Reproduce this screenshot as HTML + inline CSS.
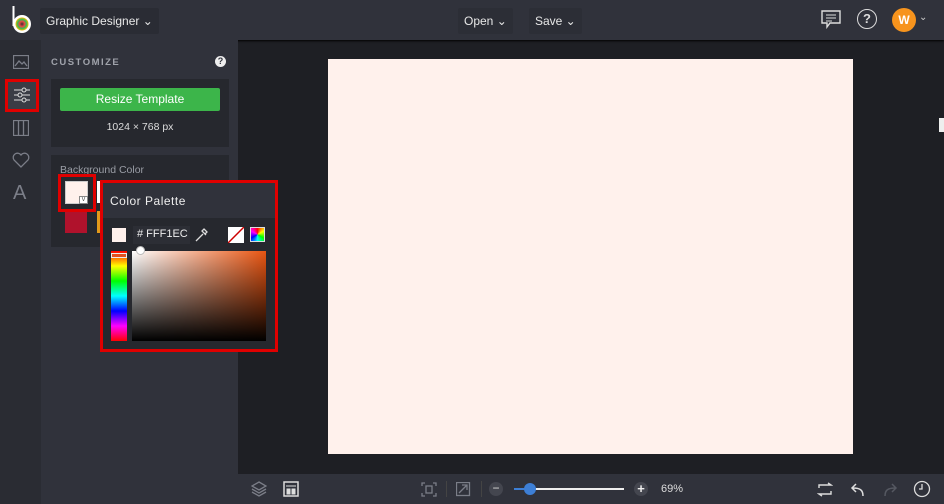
<!DOCTYPE html>
<html><head><meta charset="utf-8"><style>
*{box-sizing:border-box;margin:0;padding:0}
body{width:944px;height:504px;overflow:hidden;background:#1e1f24;font-family:"Liberation Sans",sans-serif;position:relative;color:#ddd}
.abs{position:absolute}
.top{left:0;top:0;width:944px;height:40px;background:#30323b;box-shadow:0 1px 2px #000}
.btn{font-size:12px;color:#e8e8e8;padding:6px 6px;background:#2a2c34;border-radius:2px}
.rail{left:0;top:40px;width:41px;height:464px;background:#2a2c33}
.panel{left:41px;top:40px;width:197px;height:464px;background:#30323b}
.card{background:#26282e}
.bottom{left:238px;top:474px;width:706px;height:30px;background:#30323b}
.ic{stroke:#7b7e88;fill:none;stroke-width:1.3}
</style></head><body>
<div class="abs top">
 <svg class="abs" style="left:10px;top:4px" width="24" height="30"><path d="M3.5 2v20" stroke="#fff" stroke-width="2"/><circle cx="12" cy="20" r="9" fill="#fff"/><circle cx="12" cy="20" r="6.5" fill="url(#g)"/><defs><radialGradient id="g"><stop offset="0" stop-color="#333"/><stop offset=".4" stop-color="#e44"/><stop offset=".7" stop-color="#3b5"/><stop offset="1" stop-color="#fb0"/></radialGradient></defs></svg>
 <div class="abs btn" style="left:40px;top:8px">Graphic Designer ⌄</div>
 <div class="abs btn" style="left:458px;top:8px;background:#2c2e36">Open ⌄</div>
 <div class="abs btn" style="left:529px;top:8px;background:#2c2e36">Save ⌄</div>
 <svg class="abs" style="left:820px;top:9px" width="22" height="20"><path d="M2 2h18v12H10l-3 4v-4H2z" stroke="#ddd" fill="none" stroke-width="1.4"/><path d="M6 6h10M6 9h10M6 12h6" stroke="#ddd"/></svg>
 <div class="abs" style="left:857px;top:9px;width:20px;height:20px;border:1.6px solid #ddd;border-radius:50%;font-size:13px;font-weight:bold;text-align:center;line-height:17px;color:#ddd">?</div>
 <div class="abs" style="left:892px;top:8px;width:24px;height:24px;border-radius:50%;background:#f7941d;color:#fff;font-weight:bold;font-size:12px;text-align:center;line-height:24px">W</div>
 <div class="abs" style="left:919px;top:12px;font-size:10px;color:#ccc">⌄</div>
</div>
<div class="abs rail">
 <svg class="abs" style="left:13px;top:15px" width="16" height="14"><rect x=".5" y=".5" width="15" height="13" class="ic"/><path d="M2 11l4-5 3 3 2-2 3 4" class="ic"/></svg>
 <div class="abs" style="left:5px;top:39px;width:34px;height:33px;border:3px solid #e00000;background:#3a3c45"></div>
 <svg class="abs" style="left:13px;top:47px" width="18" height="16"><path d="M1 3h16M1 8h16M1 13h16" stroke="#ddd"/><circle cx="11" cy="3" r="2" fill="#3a3c45" stroke="#ddd"/><circle cx="7" cy="8" r="2" fill="#3a3c45" stroke="#ddd"/><circle cx="11" cy="13" r="2" fill="#3a3c45" stroke="#ddd"/></svg>
 <svg class="abs" style="left:13px;top:80px" width="16" height="16"><rect x=".5" y=".5" width="15" height="15" class="ic"/><path d="M5.5 1v15M10.5 1v15" class="ic"/></svg>
 <svg class="abs" style="left:12px;top:112px" width="18" height="16"><path d="M9 15L2 8a4 4 0 0 1 7-5 4 4 0 0 1 7 5z" class="ic"/></svg>
 <div class="abs" style="left:13px;top:142px;font-size:20px;color:#7b7e88">A</div>
</div>
<div class="abs panel">
 <div class="abs" style="left:10px;top:17px;font-size:9.5px;letter-spacing:1.5px;color:#a0a3ab;font-weight:bold">CUSTOMIZE</div>
 <div class="abs" style="left:174px;top:16px;width:11px;height:11px;border-radius:50%;background:#eee;color:#30323b;font-size:9px;font-weight:bold;text-align:center;line-height:11px">?</div>
 <div class="abs card" style="left:10px;top:39px;width:178px;height:68px">
  <div class="abs" style="left:9px;top:9px;width:160px;height:23px;background:#3cb54a;border-radius:2px;color:#fff;font-size:12px;text-align:center;line-height:23px">Resize Template</div>
  <div class="abs" style="left:0;top:42px;width:178px;text-align:center;font-size:10.5px;color:#ddd">1024 × 768 px</div>
 </div>
 <div class="abs card" style="left:10px;top:115px;width:178px;height:92px">
  <div class="abs" style="left:9px;top:9px;font-size:10.5px;color:#9a9da5">Background Color</div>
  <div class="abs" style="left:14px;top:56px;width:22px;height:22px;background:#b0122c"></div>
  <div class="abs" style="left:46px;top:56px;width:6px;height:22px;background:#e39a1a"></div>
  <div class="abs" style="left:46px;top:26px;width:6px;height:22px;background:#fff"></div>
 </div>
</div>
<div class="abs" style="left:58px;top:174px;width:38px;height:38px;border:3px solid #e00000;background:#26282e"></div>
<div class="abs" style="left:65px;top:181px;width:23px;height:23px;background:#fff1ec;border:1px solid #ccc"></div>
<div class="abs" style="left:79px;top:196px;width:9px;height:8px;border:1px solid #888;background:#fff;font-size:7px;line-height:6px;text-align:center;color:#555">v</div>
<div class="abs" style="left:100px;top:180px;width:178px;height:172px;border:3px solid #e00000;background:#26282e">
 <div class="abs" style="left:0;top:0;width:172px;height:35px;background:#30323b;font-size:12px;color:#eee;padding:11px 0 0 7px;letter-spacing:.5px">Color Palette</div>
 <div class="abs" style="left:9px;top:45px;width:14px;height:14px;background:#fff1ec"></div>
 <div class="abs" style="left:30px;top:43px;width:57px;height:18px;background:#2c2e35;font-size:11px;color:#eee;padding:2px 0 0 4px">#&nbsp;FFF1EC</div>
 <svg class="abs" style="left:91px;top:44px" width="14" height="16"><path d="M2 14l7-7M8 4l4 4M10 2l3 3-2 2-3-3z" stroke="#ddd" fill="none" stroke-width="1.3"/></svg>
 <svg class="abs" style="left:125px;top:44px" width="16" height="16"><rect width="16" height="16" fill="#fff"/><path d="M0 16L16 0" stroke="#c00" stroke-width="1.5"/></svg>
 <div class="abs" style="left:147px;top:44px;width:15px;height:15px;background:conic-gradient(red,yellow,lime,cyan,blue,magenta,red);border:1px solid #ddd"></div>
 <div class="abs" style="left:8px;top:68px;width:16px;height:90px;background:linear-gradient(red,yellow,lime,cyan,blue,magenta,red)"></div>
 <div class="abs" style="left:8px;top:70px;width:16px;height:5px;border:1px solid #eee;background:#e2501f"></div>
 <div class="abs" style="left:29px;top:68px;width:134px;height:90px;background:linear-gradient(to bottom,rgba(0,0,0,0),#000),linear-gradient(to right,#fff,#e85512)"></div>
 <div class="abs" style="left:33px;top:63px;width:9px;height:9px;border-radius:50%;background:#fff;border:1px solid #bbb"></div>
</div>
<div class="abs" style="left:328px;top:59px;width:525px;height:395px;background:#fff1ec"></div>
<div class="abs" style="left:939px;top:118px;width:5px;height:14px;background:#eee"></div>
<div class="abs bottom">
 <svg class="abs" style="left:13px;top:7px" width="16" height="16"><path d="M8 1l7 4-7 4-7-4z M1 8l7 4 7-4M1 11l7 4 7-4" class="ic"/></svg>
 <svg class="abs" style="left:45px;top:7px" width="16" height="16"><rect x="1" y="1" width="14" height="14" stroke="#ddd" fill="none" stroke-width="1.5"/><path d="M3 5h10M4 8h3v5H4zM9 8h3v5H9z" stroke="#ddd" fill="#ddd"/></svg>
 <svg class="abs" style="left:183px;top:8px" width="16" height="15"><path d="M1 4V1h3M12 1h3v3M15 11v3h-3M4 14H1v-3" class="ic"/><rect x="5" y="4" width="6" height="7" class="ic"/></svg>
 <div class="abs" style="left:208px;top:7px;width:1px;height:16px;background:#444"></div>
 <svg class="abs" style="left:218px;top:8px" width="15" height="15"><rect x=".5" y=".5" width="13" height="13" class="ic"/><path d="M3 11l8-8M6 3h5v5" class="ic"/></svg>
 <div class="abs" style="left:243px;top:7px;width:1px;height:16px;background:#444"></div>
 <div class="abs" style="left:251px;top:8px;width:14px;height:14px;border-radius:50%;background:#44464f;color:#ddd;font-size:12px;text-align:center;line-height:13px">−</div>
 <div class="abs" style="left:276px;top:14px;width:110px;height:2px;background:#eee"></div>
 <div class="abs" style="left:276px;top:14px;width:15px;height:2px;background:#3d7fd6"></div>
 <div class="abs" style="left:286px;top:9px;width:12px;height:12px;border-radius:50%;background:#3d7fd6"></div>
 <div class="abs" style="left:396px;top:8px;width:14px;height:14px;border-radius:50%;background:#44464f;color:#eee;font-size:13px;font-weight:bold;text-align:center;line-height:14px">+</div>
 <div class="abs" style="left:423px;top:9px;font-size:11px;color:#ddd">69%</div>
 <svg class="abs" style="left:579px;top:8px" width="16" height="15"><path d="M2 6V3h12l-3-2M14 9v3H2l3 2" stroke="#ddd" fill="none" stroke-width="1.4"/></svg>
 <svg class="abs" style="left:611px;top:7px" width="16" height="16"><path d="M14 15c0-6-3-8-10-8M7 3L3 7l4 4" stroke="#ddd" fill="none" stroke-width="1.5"/></svg>
 <svg class="abs" style="left:645px;top:7px" width="16" height="16"><path d="M2 15c0-6 3-8 10-8M9 3l4 4-4 4" stroke="#555861" fill="none" stroke-width="1.5"/></svg>
 <svg class="abs" style="left:675px;top:6px" width="18" height="18"><circle cx="9" cy="9" r="7.5" stroke="#ddd" fill="none" stroke-width="1.3"/><path d="M9 4v5H6" stroke="#ddd" fill="none" stroke-width="1.3"/></svg>
</div>
</body></html>
